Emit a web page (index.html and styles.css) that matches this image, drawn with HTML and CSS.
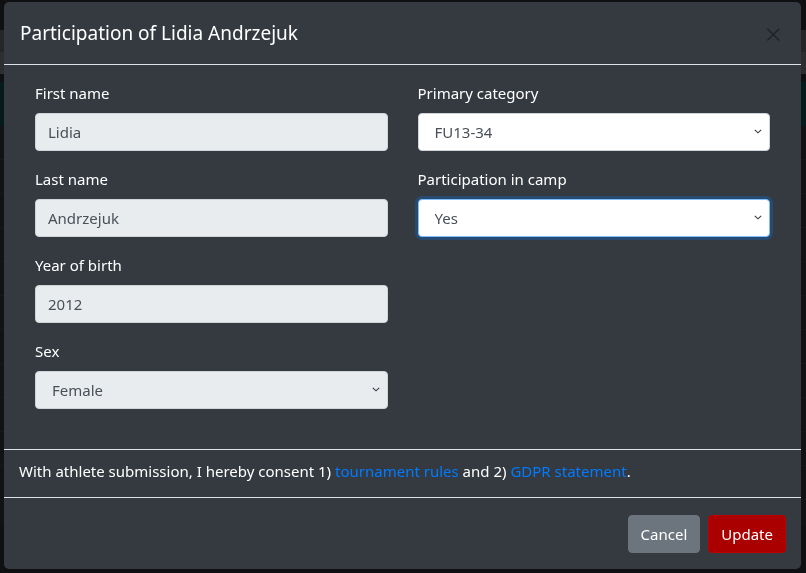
FILE: index.html
```html
<!DOCTYPE html>
<html lang="en">
<head>
    <meta charset="UTF-8">
    <meta name="viewport" content="width=device-width, initial-scale=1.0">
    <title>Participation</title>
    <link rel="stylesheet" href="styles.css">
</head>
<body>
    <div class="page">
        <div class="page-nav"></div>
        <div class="page-band grey"></div>
        <div class="page-band teal"></div>
        <div class="page-rows"></div>
    </div>

    <div class="modal-backdrop"></div>

    <div class="modal">
        <div class="modal-header">
            <h5 class="modal-title">Participation of Lidia Andrzejuk</h5>
            <span class="close">&times;</span>
        </div>

        <div class="modal-body">
            <div class="form-grid">
                <div class="form-col">
                    <div class="form-group">
                        <label>First name</label>
                        <input class="form-control" type="text" value="Lidia" readonly>
                    </div>
                    <div class="form-group">
                        <label>Last name</label>
                        <input class="form-control" type="text" value="Andrzejuk" readonly>
                    </div>
                    <div class="form-group">
                        <label>Year of birth</label>
                        <input class="form-control" type="text" value="2012" readonly>
                    </div>
                    <div class="form-group">
                        <label>Sex</label>
                        <div class="select-wrap">
                            <select class="custom-select disabled">
                                <option>Female</option>
                            </select>
                            <svg class="chevron" viewBox="0 0 4 5" width="8" height="10"><path d="M0.4 1.9 L2 3.4 L3.6 1.9" fill="none" stroke="#343a40" stroke-width="0.55"/></svg>
                        </div>
                    </div>
                </div>
                <div class="form-col">
                    <div class="form-group">
                        <label>Primary category</label>
                        <div class="select-wrap">
                            <select class="custom-select">
                                <option>FU13-34</option>
                            </select>
                            <svg class="chevron" viewBox="0 0 4 5" width="8" height="10"><path d="M0.4 1.9 L2 3.4 L3.6 1.9" fill="none" stroke="#343a40" stroke-width="0.55"/></svg>
                        </div>
                    </div>
                    <div class="form-group">
                        <label>Participation in camp</label>
                        <div class="select-wrap">
                            <select class="custom-select focused">
                                <option>Yes</option>
                                <option>No</option>
                            </select>
                            <svg class="chevron" viewBox="0 0 4 5" width="8" height="10"><path d="M0.4 1.9 L2 3.4 L3.6 1.9" fill="none" stroke="#343a40" stroke-width="0.55"/></svg>
                        </div>
                    </div>
                </div>
            </div>
        </div>

        <div class="modal-consent">
            With athlete submission, I hereby consent 1) <a href="#">tournament rules</a> and 2) <a href="#">GDPR statement</a>.
        </div>

        <div class="modal-footer">
            <button class="btn btn-secondary">Cancel</button>
            <button class="btn btn-update">Update</button>
        </div>
    </div>
</body>
</html>
```

FILE: styles.css
```css
:root {
    --modal-bg: #343a40;
    --line: #dee2e6;
    --link: #007bff;
}

* {
    margin: 0;
    padding: 0;
    box-sizing: border-box;
}

body {
    font-family: 'Noto Sans', 'Open Sans', sans-serif;
    font-size: 16px;
    line-height: 1.5;
    background: #1f2123;
    color: #fff;
    height: 573px;
    overflow: hidden;
}

/* page behind the dialog */
.page-nav {
    height: 30px;
}

.page-band {
    height: 44px;
}

.page-band.grey {
    background: #5a5c5e;
    border-top: 22px solid #4a4c4e;
}

.page-band.teal {
    margin-top: 8px;
    background: #0d3438;
}

.page-rows {
    height: 400px;
    background: repeating-linear-gradient(#232527 0, #232527 33px, #2c2f31 33px, #2c2f31 34px);
}

.modal-backdrop {
    position: fixed;
    inset: 0;
    background: rgba(0, 0, 0, 0.5);
}

.modal {
    position: fixed;
    top: 2px;
    left: 4px;
    width: 797px;
    background: var(--modal-bg);
    border-radius: 5px;
    overflow: hidden;
}

.modal-header {
    display: flex;
    align-items: center;
    justify-content: space-between;
    padding: 17px 16px 16px;
    border-bottom: 1px solid var(--line);
}

.modal-title {
    font-size: 19px;
    font-weight: 400;
    line-height: 29px;
}

.close {
    font-size: 30px;
    line-height: 20px;
    color: #15181b;
    opacity: 0.7;
    margin-right: 3px;
    font-weight: 300;
}

.modal-body {
    padding: 16px 31px 24px;
}

.form-grid {
    display: grid;
    grid-template-columns: 1fr 1fr;
    column-gap: 30px;
}

.form-group {
    margin-bottom: 16px;
}

.form-group label {
    display: block;
    margin-bottom: 8px;
    font-size: 15px;
    line-height: 24px;
}

.form-control,
.custom-select {
    display: block;
    width: 100%;
    height: 38px;
    padding: 6px 12px;
    font-family: inherit;
    font-size: 15px;
    color: #495057;
    background: #fff;
    border: 1px solid #ced4da;
    border-radius: 4px;
    outline: none;
}

.form-control[readonly] {
    background: #e9ecef;
}

.select-wrap {
    position: relative;
}

.custom-select {
    appearance: none;
    -webkit-appearance: none;
    padding-left: 16px;
}

.custom-select.disabled {
    background: #e9ecef;
}

.custom-select.focused {
    border-color: #80bdff;
    box-shadow: 0 0 0 3px rgba(0, 123, 255, 0.25);
}

.chevron {
    position: absolute;
    right: 8px;
    top: 13px;
    pointer-events: none;
}

.modal-consent {
    padding: 9px 15px 14px;
    border-top: 1px solid var(--line);
    border-bottom: 1px solid var(--line);
    font-size: 15px;
    line-height: 24px;
}

.modal-consent a {
    color: var(--link);
    text-decoration: none;
}

.modal-footer {
    display: flex;
    justify-content: flex-end;
    gap: 8px;
    padding: 17px 15px 16px;
}

.btn {
    height: 38px;
    padding: 0 12px;
    font-family: inherit;
    font-size: 15px;
    color: #fff;
    border: 1px solid transparent;
    border-radius: 4px;
    cursor: pointer;
}

.btn-secondary {
    background: #6c757d;
    border-color: #6c757d;
}

.btn-update {
    background: #aa0000;
    border-color: #c00000;
}
```
